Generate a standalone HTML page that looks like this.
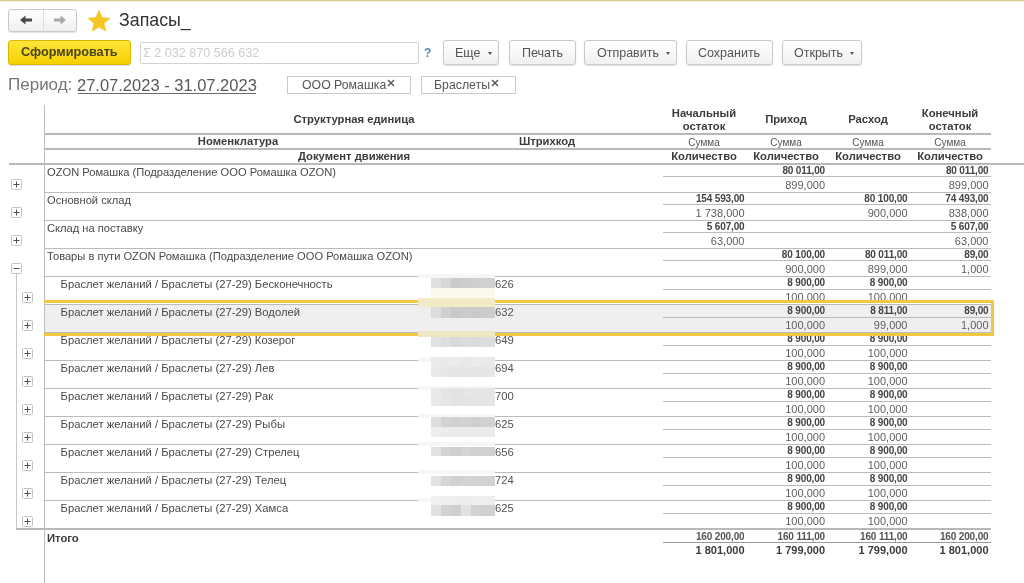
<!DOCTYPE html><html><head><meta charset="utf-8"><style>
html,body{margin:0;padding:0;width:1024px;height:583px;overflow:hidden;background:#fff;position:relative;font-family:"Liberation Sans",sans-serif;}
.ab{position:absolute;white-space:nowrap;}
.btn{position:absolute;box-sizing:border-box;border:1px solid #c9c9c9;border-radius:3px;background:linear-gradient(#ffffff,#f0f0f0);box-shadow:0 1px 1px rgba(0,0,0,0.12);font-size:12px;color:#4d4d4d;line-height:22px;}
.btn span{position:absolute;top:0;}
.tri{position:absolute;width:0;height:0;border-left:2.5px solid transparent;border-right:2.5px solid transparent;border-top:3px solid #555;}
.hl{position:absolute;height:1px;background:#bbbbbb;}
.t{position:absolute;white-space:nowrap;font-size:11.25px;line-height:15px;color:#4a4a4a;}
.hb{font-weight:bold;color:#3c3c3c;}
.num{position:absolute;white-space:nowrap;text-align:right;}
.s{font-size:10px;letter-spacing:-0.15px;font-weight:bold;color:#444;line-height:12px;}
.q{font-size:11px;color:#5e5e5e;line-height:13px;}
.pb{position:absolute;width:9px;height:9px;box-sizing:border-box;border:1px solid #bdbdbd;border-radius:1px;background:#fff;}
.pb:before{content:"";position:absolute;left:1px;top:3px;width:5px;height:1px;background:#555;}
.pb.p:after{content:"";position:absolute;left:3px;top:1px;width:1px;height:5px;background:#555;}

body>*{filter:blur(0.35px);}
</style></head><body>
<div class="ab" style="left:0;top:0;width:1024px;height:1px;background:#d6cc9a"></div>
<div class="ab" style="left:0;top:1px;width:1024px;height:1px;background:#f1ecd2"></div>
<div class="btn" style="left:8px;top:8.5px;width:69px;height:23px;"></div>
<div class="ab" style="left:43px;top:10px;width:1px;height:20px;background:#dcdcdc"></div>
<svg class="ab" style="left:18px;top:13px" width="16" height="14" viewBox="0 0 16 14"><path d="M2 7 L7.5 2.5 L7.5 5.6 L14 5.6 L14 8.4 L7.5 8.4 L7.5 11.5 Z" fill="#4a4a4a"/></svg>
<svg class="ab" style="left:52px;top:13px" width="16" height="14" viewBox="0 0 16 14"><path d="M14 7 L8.5 2.5 L8.5 5.6 L2 5.6 L2 8.4 L8.5 8.4 L8.5 11.5 Z" fill="#a8a8a8"/></svg>
<svg class="ab" style="left:87px;top:9.5px" width="24" height="23" viewBox="0 0 24 23"><path d="M12.00 0.20 L15.12 7.51 L23.03 8.22 L17.04 13.44 L18.82 21.18 L12.00 17.10 L5.18 21.18 L6.96 13.44 L0.97 8.22 L8.88 7.51 Z" fill="#f3c624" stroke="#f3c624" stroke-width="0.6" stroke-linejoin="round"/></svg>
<div class="ab" style="left:119px;top:9px;font-size:17.8px;line-height:22px;color:#333">Запасы_</div>
<div class="ab" style="left:8px;top:40px;width:123px;height:24.5px;box-sizing:border-box;border:1px solid #dcb500;border-radius:3px;background:linear-gradient(#fde63a,#f6d000);box-shadow:0 1px 1px rgba(0,0,0,0.15);"></div>
<div class="ab" style="left:21px;top:44px;font-size:12.7px;font-weight:bold;line-height:16px;color:#4b4419">Сформировать</div>
<div class="ab" style="left:140px;top:42px;width:279px;height:22px;box-sizing:border-box;border:1px solid #d2d2d2;border-radius:2px;background:#fff"></div>
<div class="ab" style="left:143px;top:45px;font-size:12.6px;line-height:16px;color:#cdcdcd">Σ 2 032 870 566 632</div>
<div class="ab" style="left:424px;top:45px;font-size:12px;font-weight:bold;line-height:16px;color:#4a8cc0">?</div>
<div class="btn" style="left:443px;top:40px;width:56px;height:25px;"></div>
<div class="ab" style="left:455px;top:45px;font-size:12.5px;line-height:16px;color:#555">Еще</div>
<div class="tri" style="left:488px;top:52px"></div>
<div class="btn" style="left:509px;top:40px;width:67px;height:25px;"></div>
<div class="ab" style="left:522px;top:45px;font-size:12.5px;line-height:16px;color:#555">Печать</div>
<div class="btn" style="left:584px;top:40px;width:93px;height:25px;"></div>
<div class="ab" style="left:597px;top:45px;font-size:12.5px;line-height:16px;color:#555">Отправить</div>
<div class="tri" style="left:666px;top:52px"></div>
<div class="btn" style="left:686px;top:40px;width:87px;height:25px;"></div>
<div class="ab" style="left:698px;top:45px;font-size:12.5px;line-height:16px;color:#555">Сохранить</div>
<div class="btn" style="left:782px;top:40px;width:80px;height:25px;"></div>
<div class="ab" style="left:794px;top:45px;font-size:12.5px;line-height:16px;color:#555">Открыть</div>
<div class="tri" style="left:850px;top:52px"></div>
<div class="ab" style="left:8px;top:74px;font-size:17px;line-height:21px;color:#767676">Период:</div>
<div class="ab" style="left:77px;top:75px;font-size:16.5px;line-height:20px;color:#595959;">27.07.2023 - 31.07.2023</div>
<div class="ab" style="left:78px;top:93px;width:178px;height:1px;background:#6a6a6a"></div>
<div class="ab" style="left:287px;top:76px;width:124px;height:18px;box-sizing:border-box;border:1px solid #cacaca;background:#fff"></div>
<div class="ab" style="left:302px;top:77px;font-size:12.3px;line-height:16px;color:#555">ООО Ромашка</div>
<svg class="ab" style="left:386.5px;top:79px" width="8" height="8" viewBox="0 0 8 8"><path d="M1 1 L7 7 M7 1 L1 7" stroke="#5a5a5a" stroke-width="1.5"/></svg>
<div class="ab" style="left:421px;top:76px;width:95px;height:18px;box-sizing:border-box;border:1px solid #cacaca;background:#fff"></div>
<div class="ab" style="left:434px;top:77px;font-size:12.3px;line-height:16px;color:#555">Браслеты</div>
<svg class="ab" style="left:490.5px;top:79px" width="8" height="8" viewBox="0 0 8 8"><path d="M1 1 L7 7 M7 1 L1 7" stroke="#5a5a5a" stroke-width="1.5"/></svg>
<div class="ab" style="left:44px;top:105px;width:1px;height:478px;background:#bdbdbd"></div>
<div class="hl" style="left:44px;top:133px;width:947px;background:#b8b8b8;height:2px"></div>
<div class="hl" style="left:44px;top:148px;width:947px;background:#b8b8b8;height:2px"></div>
<div class="hl" style="left:9px;top:163px;width:1015px;background:#b8b8b8;height:2px"></div>
<div class="t hb" style="left:254px;width:200px;text-align:center;top:112px;">Структурная единица</div>
<div class="t hb" style="left:138px;width:200px;text-align:center;top:134px;">Номенклатура</div>
<div class="t hb" style="left:447px;width:200px;text-align:center;top:134px;">Штрихкод</div>
<div class="t hb" style="left:254px;width:200px;text-align:center;top:149px;">Документ движения</div>
<div class="t hb" style="left:604px;width:200px;text-align:center;top:106px;">Начальный</div>
<div class="t hb" style="left:604px;width:200px;text-align:center;top:119px;">остаток</div>
<div class="t" style="left:654px;width:100px;text-align:center;top:135px;font-size:10px;color:#555">Сумма</div>
<div class="t hb" style="left:604px;width:200px;text-align:center;top:149px;">Количество</div>
<div class="t hb" style="left:686px;width:200px;text-align:center;top:112px;">Приход</div>
<div class="t" style="left:736px;width:100px;text-align:center;top:135px;font-size:10px;color:#555">Сумма</div>
<div class="t hb" style="left:686px;width:200px;text-align:center;top:149px;">Количество</div>
<div class="t hb" style="left:768px;width:200px;text-align:center;top:112px;">Расход</div>
<div class="t" style="left:818px;width:100px;text-align:center;top:135px;font-size:10px;color:#555">Сумма</div>
<div class="t hb" style="left:768px;width:200px;text-align:center;top:149px;">Количество</div>
<div class="t hb" style="left:850px;width:200px;text-align:center;top:106px;">Конечный</div>
<div class="t hb" style="left:850px;width:200px;text-align:center;top:119px;">остаток</div>
<div class="t" style="left:900px;width:100px;text-align:center;top:135px;font-size:10px;color:#555">Сумма</div>
<div class="t hb" style="left:850px;width:200px;text-align:center;top:149px;">Количество</div>
<div class="ab" style="left:45px;top:304px;width:946px;height:29px;background:#efefef"></div>
<div class="hl" style="left:663px;top:176px;width:328px"></div>
<div class="t" style="left:47px;top:165px;font-size:11.15px">OZON Ромашка (Подразделение ООО Ромашка OZON)</div>
<div class="num s" style="left:745px;width:80px;top:165px">80 011,00</div>
<div class="num q" style="left:745px;width:80px;top:179px">899,000</div>
<div class="num s" style="left:908.5px;width:80px;top:165px">80 011,00</div>
<div class="num q" style="left:908.5px;width:80px;top:179px">899,000</div>
<svg class="ab" style="left:10.5px;top:179px" width="11" height="11" viewBox="0 0 11 11"><rect x="0.5" y="0.5" width="10" height="10" rx="1" fill="#fff" stroke="#c2c2c2"/><path d="M2.5 5.5 H8.5" stroke="#505050" stroke-width="1"/><path d="M5.5 2.5 V8.5" stroke="#505050" stroke-width="1"/></svg>
<div class="hl" style="left:44px;top:192px;width:947px"></div>
<div class="hl" style="left:663px;top:204px;width:328px"></div>
<div class="t" style="left:47px;top:193px;font-size:11.15px">Основной склад</div>
<div class="num s" style="left:664.5px;width:80px;top:193px">154 593,00</div>
<div class="num q" style="left:664.5px;width:80px;top:207px">1 738,000</div>
<div class="num s" style="left:827.5px;width:80px;top:193px">80 100,00</div>
<div class="num q" style="left:827.5px;width:80px;top:207px">900,000</div>
<div class="num s" style="left:908.5px;width:80px;top:193px">74 493,00</div>
<div class="num q" style="left:908.5px;width:80px;top:207px">838,000</div>
<svg class="ab" style="left:10.5px;top:207px" width="11" height="11" viewBox="0 0 11 11"><rect x="0.5" y="0.5" width="10" height="10" rx="1" fill="#fff" stroke="#c2c2c2"/><path d="M2.5 5.5 H8.5" stroke="#505050" stroke-width="1"/><path d="M5.5 2.5 V8.5" stroke="#505050" stroke-width="1"/></svg>
<div class="hl" style="left:44px;top:220px;width:947px"></div>
<div class="hl" style="left:663px;top:232px;width:328px"></div>
<div class="t" style="left:47px;top:221px;font-size:11.15px">Склад на поставку</div>
<div class="num s" style="left:664.5px;width:80px;top:221px">5 607,00</div>
<div class="num q" style="left:664.5px;width:80px;top:235px">63,000</div>
<div class="num s" style="left:908.5px;width:80px;top:221px">5 607,00</div>
<div class="num q" style="left:908.5px;width:80px;top:235px">63,000</div>
<svg class="ab" style="left:10.5px;top:235px" width="11" height="11" viewBox="0 0 11 11"><rect x="0.5" y="0.5" width="10" height="10" rx="1" fill="#fff" stroke="#c2c2c2"/><path d="M2.5 5.5 H8.5" stroke="#505050" stroke-width="1"/><path d="M5.5 2.5 V8.5" stroke="#505050" stroke-width="1"/></svg>
<div class="hl" style="left:44px;top:248px;width:947px"></div>
<div class="hl" style="left:663px;top:260px;width:328px"></div>
<div class="t" style="left:47px;top:249px;font-size:11.15px">Товары в пути OZON Ромашка (Подразделение ООО Ромашка OZON)</div>
<div class="num s" style="left:745px;width:80px;top:249px">80 100,00</div>
<div class="num q" style="left:745px;width:80px;top:263px">900,000</div>
<div class="num s" style="left:827.5px;width:80px;top:249px">80 011,00</div>
<div class="num q" style="left:827.5px;width:80px;top:263px">899,000</div>
<div class="num s" style="left:908.5px;width:80px;top:249px">89,00</div>
<div class="num q" style="left:908.5px;width:80px;top:263px">1,000</div>
<svg class="ab" style="left:10.5px;top:263px" width="11" height="11" viewBox="0 0 11 11"><rect x="0.5" y="0.5" width="10" height="10" rx="1" fill="#fff" stroke="#c2c2c2"/><path d="M2.5 5.5 H8.5" stroke="#505050" stroke-width="1"/></svg>
<div class="hl" style="left:44px;top:276px;width:947px"></div>
<div class="hl" style="left:663px;top:289px;width:328px"></div>
<div class="t" style="left:60.5px;top:277px;font-size:11.25px">Браслет желаний / Браслеты (27-29) Бесконечность</div>
<div class="t" style="left:495px;top:277px;color:#555">626</div>
<div class="num s" style="left:745px;width:80px;top:277px">8 900,00</div>
<div class="num q" style="left:745px;width:80px;top:291px">100,000</div>
<div class="num s" style="left:827.5px;width:80px;top:277px">8 900,00</div>
<div class="num q" style="left:827.5px;width:80px;top:291px">100,000</div>
<svg class="ab" style="left:22px;top:292px" width="11" height="11" viewBox="0 0 11 11"><rect x="0.5" y="0.5" width="10" height="10" rx="1" fill="#fff" stroke="#c2c2c2"/><path d="M2.5 5.5 H8.5" stroke="#505050" stroke-width="1"/><path d="M5.5 2.5 V8.5" stroke="#505050" stroke-width="1"/></svg>
<div class="hl" style="left:44px;top:304px;width:947px"></div>
<div class="hl" style="left:663px;top:317px;width:328px"></div>
<div class="t" style="left:60.5px;top:305px;font-size:11.25px">Браслет желаний / Браслеты (27-29) Водолей</div>
<div class="t" style="left:495px;top:305px;color:#555">632</div>
<div class="num s" style="left:745px;width:80px;top:305px">8 900,00</div>
<div class="num q" style="left:745px;width:80px;top:319px">100,000</div>
<div class="num s" style="left:827.5px;width:80px;top:305px">8 811,00</div>
<div class="num q" style="left:827.5px;width:80px;top:319px">99,000</div>
<div class="num s" style="left:908.5px;width:80px;top:305px">89,00</div>
<div class="num q" style="left:908.5px;width:80px;top:319px">1,000</div>
<svg class="ab" style="left:22px;top:320px" width="11" height="11" viewBox="0 0 11 11"><rect x="0.5" y="0.5" width="10" height="10" rx="1" fill="#fff" stroke="#c2c2c2"/><path d="M2.5 5.5 H8.5" stroke="#505050" stroke-width="1"/><path d="M5.5 2.5 V8.5" stroke="#505050" stroke-width="1"/></svg>
<div class="hl" style="left:44px;top:332px;width:947px"></div>
<div class="hl" style="left:663px;top:345px;width:328px"></div>
<div class="t" style="left:60.5px;top:333px;font-size:11.25px">Браслет желаний / Браслеты (27-29) Козерог</div>
<div class="t" style="left:495px;top:333px;color:#555">649</div>
<div class="num s" style="left:745px;width:80px;top:333px">8 900,00</div>
<div class="num q" style="left:745px;width:80px;top:347px">100,000</div>
<div class="num s" style="left:827.5px;width:80px;top:333px">8 900,00</div>
<div class="num q" style="left:827.5px;width:80px;top:347px">100,000</div>
<svg class="ab" style="left:22px;top:348px" width="11" height="11" viewBox="0 0 11 11"><rect x="0.5" y="0.5" width="10" height="10" rx="1" fill="#fff" stroke="#c2c2c2"/><path d="M2.5 5.5 H8.5" stroke="#505050" stroke-width="1"/><path d="M5.5 2.5 V8.5" stroke="#505050" stroke-width="1"/></svg>
<div class="hl" style="left:44px;top:360px;width:947px"></div>
<div class="hl" style="left:663px;top:373px;width:328px"></div>
<div class="t" style="left:60.5px;top:361px;font-size:11.25px">Браслет желаний / Браслеты (27-29) Лев</div>
<div class="t" style="left:495px;top:361px;color:#555">694</div>
<div class="num s" style="left:745px;width:80px;top:361px">8 900,00</div>
<div class="num q" style="left:745px;width:80px;top:375px">100,000</div>
<div class="num s" style="left:827.5px;width:80px;top:361px">8 900,00</div>
<div class="num q" style="left:827.5px;width:80px;top:375px">100,000</div>
<svg class="ab" style="left:22px;top:376px" width="11" height="11" viewBox="0 0 11 11"><rect x="0.5" y="0.5" width="10" height="10" rx="1" fill="#fff" stroke="#c2c2c2"/><path d="M2.5 5.5 H8.5" stroke="#505050" stroke-width="1"/><path d="M5.5 2.5 V8.5" stroke="#505050" stroke-width="1"/></svg>
<div class="hl" style="left:44px;top:388px;width:947px"></div>
<div class="hl" style="left:663px;top:401px;width:328px"></div>
<div class="t" style="left:60.5px;top:389px;font-size:11.25px">Браслет желаний / Браслеты (27-29) Рак</div>
<div class="t" style="left:495px;top:389px;color:#555">700</div>
<div class="num s" style="left:745px;width:80px;top:389px">8 900,00</div>
<div class="num q" style="left:745px;width:80px;top:403px">100,000</div>
<div class="num s" style="left:827.5px;width:80px;top:389px">8 900,00</div>
<div class="num q" style="left:827.5px;width:80px;top:403px">100,000</div>
<svg class="ab" style="left:22px;top:404px" width="11" height="11" viewBox="0 0 11 11"><rect x="0.5" y="0.5" width="10" height="10" rx="1" fill="#fff" stroke="#c2c2c2"/><path d="M2.5 5.5 H8.5" stroke="#505050" stroke-width="1"/><path d="M5.5 2.5 V8.5" stroke="#505050" stroke-width="1"/></svg>
<div class="hl" style="left:44px;top:416px;width:947px"></div>
<div class="hl" style="left:663px;top:429px;width:328px"></div>
<div class="t" style="left:60.5px;top:417px;font-size:11.25px">Браслет желаний / Браслеты (27-29) Рыбы</div>
<div class="t" style="left:495px;top:417px;color:#555">625</div>
<div class="num s" style="left:745px;width:80px;top:417px">8 900,00</div>
<div class="num q" style="left:745px;width:80px;top:431px">100,000</div>
<div class="num s" style="left:827.5px;width:80px;top:417px">8 900,00</div>
<div class="num q" style="left:827.5px;width:80px;top:431px">100,000</div>
<svg class="ab" style="left:22px;top:432px" width="11" height="11" viewBox="0 0 11 11"><rect x="0.5" y="0.5" width="10" height="10" rx="1" fill="#fff" stroke="#c2c2c2"/><path d="M2.5 5.5 H8.5" stroke="#505050" stroke-width="1"/><path d="M5.5 2.5 V8.5" stroke="#505050" stroke-width="1"/></svg>
<div class="hl" style="left:44px;top:444px;width:947px"></div>
<div class="hl" style="left:663px;top:457px;width:328px"></div>
<div class="t" style="left:60.5px;top:445px;font-size:11.25px">Браслет желаний / Браслеты (27-29) Стрелец</div>
<div class="t" style="left:495px;top:445px;color:#555">656</div>
<div class="num s" style="left:745px;width:80px;top:445px">8 900,00</div>
<div class="num q" style="left:745px;width:80px;top:459px">100,000</div>
<div class="num s" style="left:827.5px;width:80px;top:445px">8 900,00</div>
<div class="num q" style="left:827.5px;width:80px;top:459px">100,000</div>
<svg class="ab" style="left:22px;top:460px" width="11" height="11" viewBox="0 0 11 11"><rect x="0.5" y="0.5" width="10" height="10" rx="1" fill="#fff" stroke="#c2c2c2"/><path d="M2.5 5.5 H8.5" stroke="#505050" stroke-width="1"/><path d="M5.5 2.5 V8.5" stroke="#505050" stroke-width="1"/></svg>
<div class="hl" style="left:44px;top:472px;width:947px"></div>
<div class="hl" style="left:663px;top:485px;width:328px"></div>
<div class="t" style="left:60.5px;top:473px;font-size:11.25px">Браслет желаний / Браслеты (27-29) Телец</div>
<div class="t" style="left:495px;top:473px;color:#555">724</div>
<div class="num s" style="left:745px;width:80px;top:473px">8 900,00</div>
<div class="num q" style="left:745px;width:80px;top:487px">100,000</div>
<div class="num s" style="left:827.5px;width:80px;top:473px">8 900,00</div>
<div class="num q" style="left:827.5px;width:80px;top:487px">100,000</div>
<svg class="ab" style="left:22px;top:488px" width="11" height="11" viewBox="0 0 11 11"><rect x="0.5" y="0.5" width="10" height="10" rx="1" fill="#fff" stroke="#c2c2c2"/><path d="M2.5 5.5 H8.5" stroke="#505050" stroke-width="1"/><path d="M5.5 2.5 V8.5" stroke="#505050" stroke-width="1"/></svg>
<div class="hl" style="left:44px;top:500px;width:947px"></div>
<div class="hl" style="left:663px;top:513px;width:328px"></div>
<div class="t" style="left:60.5px;top:501px;font-size:11.25px">Браслет желаний / Браслеты (27-29) Хамса</div>
<div class="t" style="left:495px;top:501px;color:#555">625</div>
<div class="num s" style="left:745px;width:80px;top:501px">8 900,00</div>
<div class="num q" style="left:745px;width:80px;top:515px">100,000</div>
<div class="num s" style="left:827.5px;width:80px;top:501px">8 900,00</div>
<div class="num q" style="left:827.5px;width:80px;top:515px">100,000</div>
<svg class="ab" style="left:22px;top:516px" width="11" height="11" viewBox="0 0 11 11"><rect x="0.5" y="0.5" width="10" height="10" rx="1" fill="#fff" stroke="#c2c2c2"/><path d="M2.5 5.5 H8.5" stroke="#505050" stroke-width="1"/><path d="M5.5 2.5 V8.5" stroke="#505050" stroke-width="1"/></svg>
<div class="ab" style="left:418px;top:274px;width:77px;height:4px;background:#f6f6f6"></div>
<div class="ab" style="left:418px;top:358px;width:77px;height:4px;background:#f6f6f6"></div>
<div class="ab" style="left:418px;top:386px;width:77px;height:4px;background:#f6f6f6"></div>
<div class="ab" style="left:418px;top:414px;width:77px;height:4px;background:#f6f6f6"></div>
<div class="ab" style="left:418px;top:442px;width:77px;height:4px;background:#f6f6f6"></div>
<div class="ab" style="left:418px;top:470px;width:77px;height:4px;background:#f6f6f6"></div>
<div class="ab" style="left:418px;top:498px;width:77px;height:4px;background:#f6f6f6"></div>
<div class="ab" style="left:431px;top:288px;width:64px;height:10px;background:#fbf9ee"></div>
<div class="ab" style="left:431px;top:278px;width:10px;height:10px;background:#e0e0e0"></div>
<div class="ab" style="left:441px;top:278px;width:10px;height:10px;background:#d6d6d6"></div>
<div class="ab" style="left:451px;top:278px;width:10px;height:10px;background:#cbcbcb"></div>
<div class="ab" style="left:461px;top:278px;width:10px;height:10px;background:#cdcdcd"></div>
<div class="ab" style="left:471px;top:278px;width:10px;height:10px;background:#cfcfcf"></div>
<div class="ab" style="left:481px;top:278px;width:14px;height:10px;background:#d0d0d0"></div>
<div class="ab" style="left:431px;top:307px;width:10px;height:11px;background:#dcdcdc"></div>
<div class="ab" style="left:441px;top:307px;width:10px;height:11px;background:#cfcfcf"></div>
<div class="ab" style="left:451px;top:307px;width:10px;height:11px;background:#c9c9c9"></div>
<div class="ab" style="left:461px;top:307px;width:10px;height:11px;background:#cbcbcb"></div>
<div class="ab" style="left:471px;top:307px;width:10px;height:11px;background:#cacaca"></div>
<div class="ab" style="left:481px;top:307px;width:14px;height:11px;background:#cccccc"></div>
<div class="ab" style="left:431px;top:337px;width:10px;height:10px;background:#e2e2e2"></div>
<div class="ab" style="left:441px;top:337px;width:10px;height:10px;background:#dedede"></div>
<div class="ab" style="left:451px;top:337px;width:10px;height:10px;background:#dadada"></div>
<div class="ab" style="left:461px;top:337px;width:10px;height:10px;background:#dcdcdc"></div>
<div class="ab" style="left:471px;top:337px;width:10px;height:10px;background:#dbdbdb"></div>
<div class="ab" style="left:481px;top:337px;width:14px;height:10px;background:#dddddd"></div>
<div class="ab" style="left:431px;top:357px;width:10px;height:10px;background:#ececec"></div>
<div class="ab" style="left:441px;top:357px;width:10px;height:10px;background:#eaeaea"></div>
<div class="ab" style="left:451px;top:357px;width:10px;height:10px;background:#ebebeb"></div>
<div class="ab" style="left:461px;top:357px;width:10px;height:10px;background:#e9e9e9"></div>
<div class="ab" style="left:471px;top:357px;width:10px;height:10px;background:#ebebeb"></div>
<div class="ab" style="left:481px;top:357px;width:14px;height:10px;background:#eaeaea"></div>
<div class="ab" style="left:431px;top:367px;width:10px;height:10px;background:#e9e9e9"></div>
<div class="ab" style="left:441px;top:367px;width:10px;height:10px;background:#e6e6e6"></div>
<div class="ab" style="left:451px;top:367px;width:10px;height:10px;background:#e5e5e5"></div>
<div class="ab" style="left:461px;top:367px;width:10px;height:10px;background:#e6e6e6"></div>
<div class="ab" style="left:471px;top:367px;width:10px;height:10px;background:#e5e5e5"></div>
<div class="ab" style="left:481px;top:367px;width:14px;height:10px;background:#e6e6e6"></div>
<div class="ab" style="left:431px;top:388px;width:10px;height:9px;background:#e9e9e9"></div>
<div class="ab" style="left:441px;top:388px;width:10px;height:9px;background:#e5e5e5"></div>
<div class="ab" style="left:451px;top:388px;width:10px;height:9px;background:#e4e4e4"></div>
<div class="ab" style="left:461px;top:388px;width:10px;height:9px;background:#e5e5e5"></div>
<div class="ab" style="left:471px;top:388px;width:10px;height:9px;background:#e6e6e6"></div>
<div class="ab" style="left:481px;top:388px;width:14px;height:9px;background:#e6e6e6"></div>
<div class="ab" style="left:431px;top:397px;width:10px;height:9px;background:#e9e9e9"></div>
<div class="ab" style="left:441px;top:397px;width:10px;height:9px;background:#e6e6e6"></div>
<div class="ab" style="left:451px;top:397px;width:10px;height:9px;background:#e3e3e3"></div>
<div class="ab" style="left:461px;top:397px;width:10px;height:9px;background:#e3e3e3"></div>
<div class="ab" style="left:471px;top:397px;width:10px;height:9px;background:#e5e5e5"></div>
<div class="ab" style="left:481px;top:397px;width:14px;height:9px;background:#e5e5e5"></div>
<div class="ab" style="left:431px;top:417px;width:10px;height:10px;background:#dedede"></div>
<div class="ab" style="left:441px;top:417px;width:10px;height:10px;background:#d2d2d2"></div>
<div class="ab" style="left:451px;top:417px;width:10px;height:10px;background:#d0d0d0"></div>
<div class="ab" style="left:461px;top:417px;width:10px;height:10px;background:#d2d2d2"></div>
<div class="ab" style="left:471px;top:417px;width:10px;height:10px;background:#cfcfcf"></div>
<div class="ab" style="left:481px;top:417px;width:14px;height:10px;background:#d2d2d2"></div>
<div class="ab" style="left:431px;top:427px;width:10px;height:10px;background:#eeeeee"></div>
<div class="ab" style="left:441px;top:427px;width:10px;height:10px;background:#ececec"></div>
<div class="ab" style="left:451px;top:427px;width:10px;height:10px;background:#ebebeb"></div>
<div class="ab" style="left:461px;top:427px;width:10px;height:10px;background:#ececec"></div>
<div class="ab" style="left:471px;top:427px;width:10px;height:10px;background:#ebebeb"></div>
<div class="ab" style="left:481px;top:427px;width:14px;height:10px;background:#ececec"></div>
<div class="ab" style="left:431px;top:447px;width:10px;height:9px;background:#e2e2e2"></div>
<div class="ab" style="left:441px;top:447px;width:10px;height:9px;background:#d3d3d3"></div>
<div class="ab" style="left:451px;top:447px;width:10px;height:9px;background:#cfcfcf"></div>
<div class="ab" style="left:461px;top:447px;width:10px;height:9px;background:#d5d5d5"></div>
<div class="ab" style="left:471px;top:447px;width:10px;height:9px;background:#d1d1d1"></div>
<div class="ab" style="left:481px;top:447px;width:14px;height:9px;background:#d0d0d0"></div>
<div class="ab" style="left:431px;top:476px;width:10px;height:10px;background:#e2e2e2"></div>
<div class="ab" style="left:441px;top:476px;width:10px;height:10px;background:#d6d6d6"></div>
<div class="ab" style="left:451px;top:476px;width:10px;height:10px;background:#d1d1d1"></div>
<div class="ab" style="left:461px;top:476px;width:10px;height:10px;background:#d3d3d3"></div>
<div class="ab" style="left:471px;top:476px;width:10px;height:10px;background:#d2d2d2"></div>
<div class="ab" style="left:481px;top:476px;width:14px;height:10px;background:#d2d2d2"></div>
<div class="ab" style="left:431px;top:496px;width:10px;height:9px;background:#f0f0f0"></div>
<div class="ab" style="left:441px;top:496px;width:10px;height:9px;background:#eeeeee"></div>
<div class="ab" style="left:451px;top:496px;width:10px;height:9px;background:#eeeeee"></div>
<div class="ab" style="left:461px;top:496px;width:10px;height:9px;background:#ededed"></div>
<div class="ab" style="left:471px;top:496px;width:10px;height:9px;background:#eeeeee"></div>
<div class="ab" style="left:481px;top:496px;width:14px;height:9px;background:#eeeeee"></div>
<div class="ab" style="left:431px;top:505px;width:10px;height:11px;background:#e2e2e2"></div>
<div class="ab" style="left:441px;top:505px;width:10px;height:11px;background:#d2d2d2"></div>
<div class="ab" style="left:451px;top:505px;width:10px;height:11px;background:#cfcfcf"></div>
<div class="ab" style="left:461px;top:505px;width:10px;height:11px;background:#e2e2e2"></div>
<div class="ab" style="left:471px;top:505px;width:10px;height:11px;background:#d2d2d2"></div>
<div class="ab" style="left:481px;top:505px;width:14px;height:11px;background:#d0d0d0"></div>
<div class="ab" style="left:15.5px;top:274px;width:1px;height:254px;background:#c8c8c8"></div>
<div class="ab" style="left:16px;top:528px;width:975px;height:2px;background:#b8b8b8"></div>
<div class="ab" style="left:44px;top:300px;width:950px;height:36px;box-sizing:border-box;border:3px solid #f0ca3c;border-left:none"></div>
<div class="ab" style="left:418px;top:298px;width:77px;height:9px;background:#f3ebc8"></div>
<div class="ab" style="left:418px;top:331px;width:77px;height:6px;background:#efe6c2"></div>
<div class="t hb" style="left:47px;top:531px">Итого</div>
<div class="ab" style="left:663px;top:542px;width:328px;height:1px;background:#999"></div>
<div class="num s" style="left:664.5px;width:80px;top:531px;font-weight:bold;color:#555">160 200,00</div>
<div class="num" style="left:664.5px;width:80px;top:543px;font-size:11px;font-weight:bold;line-height:14px;color:#3c3c3c">1 801,000</div>
<div class="num s" style="left:745px;width:80px;top:531px;font-weight:bold;color:#555">160 111,00</div>
<div class="num" style="left:745px;width:80px;top:543px;font-size:11px;font-weight:bold;line-height:14px;color:#3c3c3c">1 799,000</div>
<div class="num s" style="left:827.5px;width:80px;top:531px;font-weight:bold;color:#555">160 111,00</div>
<div class="num" style="left:827.5px;width:80px;top:543px;font-size:11px;font-weight:bold;line-height:14px;color:#3c3c3c">1 799,000</div>
<div class="num s" style="left:908.5px;width:80px;top:531px;font-weight:bold;color:#555">160 200,00</div>
<div class="num" style="left:908.5px;width:80px;top:543px;font-size:11px;font-weight:bold;line-height:14px;color:#3c3c3c">1 801,000</div>
</body></html>
